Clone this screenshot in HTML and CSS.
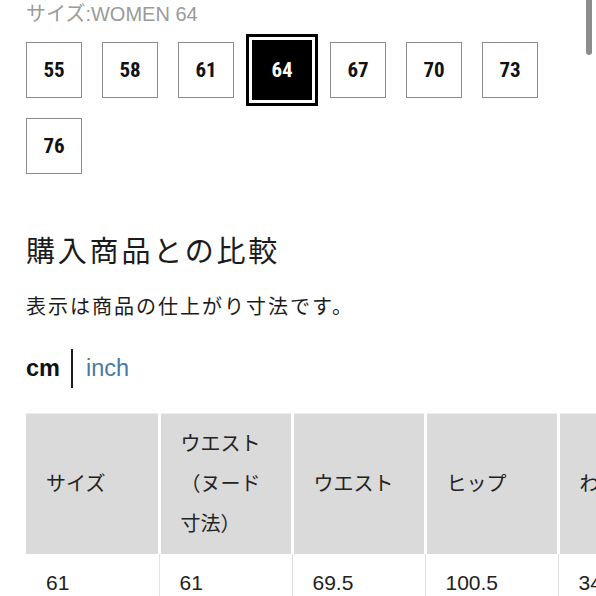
FILE: index.html
```html
<!DOCTYPE html>
<html lang="ja">
<head>
<meta charset="utf-8">
<link rel="stylesheet" href="styles.css">
</head>
<body>
<div class="page">
  <div class="size-label">サイズ:WOMEN 64</div>
  <div class="sizes">
    <div class="size">55</div>
    <div class="size">58</div>
    <div class="size">61</div>
    <div class="size selected">64</div>
    <div class="size">67</div>
    <div class="size">70</div>
    <div class="size">73</div>
    <div class="size">76</div>
  </div>
  <h2 class="heading">購入商品との比較</h2>
  <p class="note">表示は商品の仕上がり寸法です。</p>
  <div class="units">
    <span class="unit active">cm</span>
    <span class="divider"></span>
    <span class="unit link">inch</span>
  </div>
  <div class="table-wrap">
    <table class="sizes-table">
      <thead>
        <tr>
          <th>サイズ</th>
          <th>ウエスト（ヌード寸法）</th>
          <th>ウエスト</th>
          <th>ヒップ</th>
          <th>わたり幅</th>
          <th>股上</th>
        </tr>
      </thead>
      <tbody>
        <tr>
          <td>61</td>
          <td>61</td>
          <td>69.5</td>
          <td>100.5</td>
          <td>34.5</td>
          <td>30</td>
        </tr>
      </tbody>
    </table>
  </div>
</div>
<div class="scrollbar"></div>
</body>
</html>
```
FILE: styles.css
```css
html, body {
  margin: 0;
  padding: 0;
  background: #fff;
  overflow: hidden;
  width: 596px;
  height: 596px;
}
body {
  font-family: "Liberation Sans", "Noto Sans CJK JP", sans-serif;
  color: #1b1b1b;
  position: relative;
}
.page {
  padding-left: 26px;
}
.size-label {
  font-size: 20px;
  line-height: 28px;
  color: #9a9a9a;
  margin-top: 0;
  height: 28px;
}
.sizes {
  margin-top: 14px;
  display: grid;
  grid-template-columns: repeat(7, 56px);
  column-gap: 20px;
  row-gap: 20px;
}
.size {
  box-sizing: border-box;
  width: 56px;
  height: 56px;
  border: 1px solid #8a8a8a;
  display: flex;
  align-items: center;
  justify-content: center;
  font-family: "Liberation Sans Narrow", "Roboto Condensed", "Roboto", sans-serif;
  font-weight: 700;
  font-size: 21px;
  color: #111;
}
.size.selected {
  background: #000;
  border-color: #000;
  color: #fff;
  box-shadow: 0 0 0 2px #000, 0 0 0 5px #fff, 0 0 0 8px #000;
}
.heading {
  margin: 56px 0 0;
  font-family: "Noto Sans CJK JP", sans-serif;
  font-weight: 400;
  font-size: 29px;
  letter-spacing: 2.8px;
  line-height: 38px;
  color: #1b1b1b;
}
.note {
  margin: 23px 0 0;
  font-family: "Noto Sans CJK JP", sans-serif;
  font-size: 20px;
  letter-spacing: 2px;
  line-height: 30px;
  color: #1b1b1b;
}
.units {
  margin-top: 27px;
  display: flex;
  align-items: center;
  height: 40px;
}
.unit {
  font-size: 23.5px;
  line-height: 40px;
}
.unit.active {
  font-weight: 700;
  color: #111;
}
.divider {
  width: 2px;
  height: 39px;
  background: #1b1b1b;
  margin: 0 13px 0 11px;
}
.unit.link {
  color: #4b7aa0;
}
.table-wrap {
  margin-top: 25px;
  width: 700px;
}
.sizes-table {
  border-collapse: collapse;
  table-layout: fixed;
  width: 798px;
  font-family: "Noto Sans CJK JP", sans-serif;
  font-size: 20px;
}
.sizes-table th {
  width: 133px;
  box-sizing: border-box;
  height: 140px;
  background: #dadada;
  font-weight: 400;
  text-align: left;
  vertical-align: middle;
  padding: 0 20px 2px 20px;
  line-height: 40px;
  color: #222;
  border-right: 3px solid #fff;
  border-top: 1px solid #efefef;
}
.sizes-table td {
  padding: 9px 20px;
  font-family: "Liberation Sans", "Noto Sans CJK JP", sans-serif;
  font-size: 21px;
  line-height: 40px;
  color: #222;
  border-right: 1px solid #e2e2e2;
}
.scrollbar {
  position: absolute;
  top: 0;
  left: 586px;
  width: 6px;
  height: 55px;
  background: #8c8c8c;
  border-radius: 0 0 3px 3px;
}
```
